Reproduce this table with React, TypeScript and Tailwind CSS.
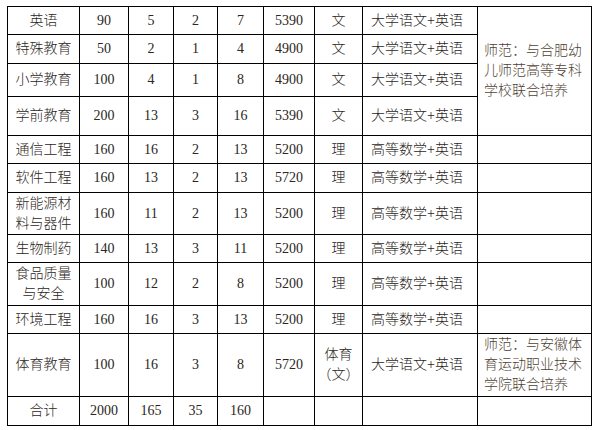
import React from "react";

type Row = {
  name: React.ReactNode;
  plan: string;
  a: string;
  b: string;
  c: string;
  fee: string;
  kind: React.ReactNode;
  exam: string;
  h: string;
};

const ROWS: Row[] = [
  { name: "英语", plan: "90", a: "5", b: "2", c: "7", fee: "5390", kind: "文", exam: "大学语文+英语", h: "h-[28px]" },
  { name: "特殊教育", plan: "50", a: "2", b: "1", c: "4", fee: "4900", kind: "文", exam: "大学语文+英语", h: "h-[29px]" },
  { name: "小学教育", plan: "100", a: "4", b: "1", c: "8", fee: "4900", kind: "文", exam: "大学语文+英语", h: "h-[33px]" },
  { name: "学前教育", plan: "200", a: "13", b: "3", c: "16", fee: "5390", kind: "文", exam: "大学语文+英语", h: "h-[39px]" },
  { name: "通信工程", plan: "160", a: "16", b: "2", c: "13", fee: "5200", kind: "理", exam: "高等数学+英语", h: "h-[28px]" },
  { name: "软件工程", plan: "160", a: "13", b: "2", c: "13", fee: "5720", kind: "理", exam: "高等数学+英语", h: "h-[29px]" },
  { name: <>新能源材<br />料与器件</>, plan: "160", a: "11", b: "2", c: "13", fee: "5200", kind: "理", exam: "高等数学+英语", h: "h-[42px]" },
  { name: "生物制药", plan: "140", a: "13", b: "3", c: "11", fee: "5200", kind: "理", exam: "高等数学+英语", h: "h-[28px]" },
  { name: <>食品质量<br />与安全</>, plan: "100", a: "12", b: "2", c: "8", fee: "5200", kind: "理", exam: "高等数学+英语", h: "h-[43px]" },
  { name: "环境工程", plan: "160", a: "16", b: "3", c: "13", fee: "5200", kind: "理", exam: "高等数学+英语", h: "h-[28px]" },
  { name: "体育教育", plan: "100", a: "16", b: "3", c: "8", fee: "5720", kind: <>体育<br />（文）</>, exam: "大学语文+英语", h: "h-[63px]" },
];

const cell = "border border-black p-0 text-center align-middle";

export default function App() {
  return (
    <div className="w-[595px] h-[430px] bg-white pl-[7px] pt-[6px] [font-family:'Liberation_Serif','Noto_Sans_CJK_SC',serif] text-[14px] leading-[20px] font-light text-[#2b2622]">
      <table className="table-fixed border-collapse w-[584px]">
        <colgroup>
          <col className="w-[72px]" />
          <col className="w-[49px]" />
          <col className="w-[45px]" />
          <col className="w-[44px]" />
          <col className="w-[46px]" />
          <col className="w-[51px]" />
          <col className="w-[48px]" />
          <col className="w-[115px]" />
          <col className="w-[114px]" />
        </colgroup>
        <tbody>
          {ROWS.map((r, i) => (
            <tr key={i} className={r.h}>
              <td className={cell}>{r.name}</td>
              <td className={cell}>{r.plan}</td>
              <td className={cell}>{r.a}</td>
              <td className={cell}>{r.b}</td>
              <td className={cell}>{r.c}</td>
              <td className={cell}>{r.fee}</td>
              <td className={`${cell} whitespace-nowrap`}>{r.kind}</td>
              <td className="border border-black pl-[8px] align-middle text-left whitespace-nowrap">{r.exam}</td>
              {i === 0 && (
                <td rowSpan={4} className="border border-black px-[6px] align-middle text-left text-[#4e3f34]">
                  师范：与合肥幼儿师范高等专科学校联合培养
                </td>
              )}
              {i >= 4 && i <= 9 && <td className="border border-black" />}
              {i === 10 && (
                <td className="border border-black px-[6px] align-middle text-left text-[#4e3f34]">
                  师范：与安徽体育运动职业技术学院联合培养
                </td>
              )}
            </tr>
          ))}
          <tr className="h-[29px]">
            <td className={cell}>合计</td>
            <td className={cell}>2000</td>
            <td className={cell}>165</td>
            <td className={cell}>35</td>
            <td className={cell}>160</td>
            <td className={cell} />
            <td className={cell} />
            <td className="border border-black" />
            <td className="border border-black" />
          </tr>
        </tbody>
      </table>
    </div>
  );
}
